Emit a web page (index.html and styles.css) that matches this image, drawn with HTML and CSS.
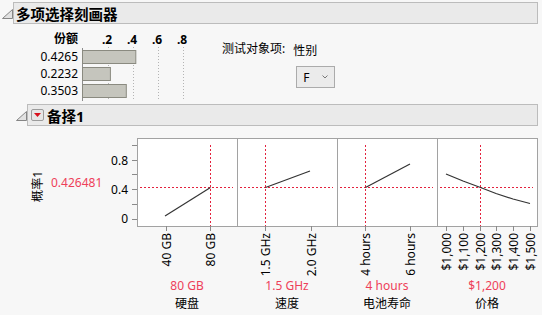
FILE: index.html
```html
<!DOCTYPE html>
<html lang="zh">
<head>
    <meta charset="UTF-8">
    <meta name="viewport" content="width=device-width, initial-scale=1.0">
    <title>多项选择刻画器</title>
    <link rel="stylesheet" href="styles.css">
</head>
<body>
    <div class="outline-head">
        <svg class="disclose" width="11" height="10" viewBox="0 0 11 10"><polygon points="0.5,9.5 10.5,0.5 10.5,9.5"/></svg>
        <div class="head-box">多项选择刻画器</div>
    </div>

    <div class="share-section">
        <div class="share-labels">
            <div class="share-title">份额</div>
            <div class="share-value">0.4265</div>
            <div class="share-value">0.2232</div>
            <div class="share-value">0.3503</div>
        </div>

        <svg class="share-plot" width="112" height="70" viewBox="0 0 112 70">
            <g class="ticks">
                <text x="25" y="11.5">.2</text>
                <text x="50" y="11.5">.4</text>
                <text x="75" y="11.5">.6</text>
                <text x="100" y="11.5">.8</text>
            </g>
            <g class="grid">
                <line x1="26.5" y1="15" x2="26.5" y2="69"/>
                <line x1="51.5" y1="15" x2="51.5" y2="69"/>
                <line x1="76.5" y1="15" x2="76.5" y2="69"/>
                <line x1="101.5" y1="15" x2="101.5" y2="69"/>
            </g>
            <line class="axis" x1="0.5" y1="16" x2="0.5" y2="69"/>
            <g class="bars">
                <rect x="0.5" y="18.5" width="53.3" height="13"/>
                <rect x="0.5" y="35.5" width="27.9" height="13"/>
                <rect x="0.5" y="52.5" width="43.8" height="13"/>
            </g>
        </svg>

        <div class="subject">
            <span class="subject-label">测试对象项:</span>
            <div class="subject-pick">
                <span class="subject-name">性别</span>
                <div class="combo">
                    <span>F</span>
                    <svg class="chevron" width="6" height="4" viewBox="0 0 6 4"><polyline points="0.5,0.5 3,3 5.5,0.5"/></svg>
                </div>
            </div>
        </div>
    </div>

    <div class="outline-head sub">
        <svg class="disclose" width="11" height="10" viewBox="0 0 11 10"><polygon points="0.5,9.5 10.5,0.5 10.5,9.5"/></svg>
        <div class="head-box">
            <span class="menu-btn"><svg width="7" height="4" viewBox="0 0 7 4"><polygon points="0,0 7,0 3.5,4"/></svg></span>
            备择1
        </div>
    </div>

    <div class="profiler">
        <div class="prof-row">
            <div class="prof-side">
                <span class="resp-name">概率1</span>
                <span class="resp-value">0.426481</span>
            </div>

            <svg class="prof-plot" width="432" height="149" viewBox="0 0 432 149">
                <!-- y axis -->
                <g class="ylabels">
                    <text x="18" y="34.5">0.8</text>
                    <text x="18" y="64">0.4</text>
                    <text x="18" y="93.3">0</text>
                </g>
                <g class="tick">
                    <line x1="22" y1="15.5" x2="27" y2="15.5"/>
                    <line x1="22" y1="30.5" x2="27" y2="30.5"/>
                    <line x1="22" y1="44.5" x2="27" y2="44.5"/>
                    <line x1="22" y1="59.5" x2="27" y2="59.5"/>
                    <line x1="22" y1="74.5" x2="27" y2="74.5"/>
                    <line x1="22" y1="89.5" x2="27" y2="89.5"/>
                </g>

                <!-- panels -->
                <g class="panel">
                    <rect x="27.5" y="8.5" width="100" height="88"/>
                    <rect x="127.5" y="8.5" width="100" height="88"/>
                    <rect x="227.5" y="8.5" width="100" height="88"/>
                    <rect x="327.5" y="8.5" width="100" height="88"/>
                </g>
                <g class="ref">
                    <line x1="30" y1="57.5" x2="123" y2="57.5"/>
                    <line x1="130" y1="57.5" x2="223" y2="57.5"/>
                    <line x1="230" y1="57.5" x2="323" y2="57.5"/>
                    <line x1="330" y1="57.5" x2="423" y2="57.5"/>
                    <line x1="100.5" y1="15" x2="100.5" y2="96"/>
                    <line x1="155.5" y1="15" x2="155.5" y2="96"/>
                    <line x1="255.5" y1="15" x2="255.5" y2="96"/>
                    <line x1="370.5" y1="15" x2="370.5" y2="96"/>
                </g>
                <g class="curve">
                    <polyline points="55,86 100.5,57.5"/>
                    <polyline points="155.5,57.5 200,41"/>
                    <polyline points="255.5,57.5 300,34"/>
                    <polyline points="336,44 353,51 370.5,57.5 386,63.5 403,69 420,73.5"/>
                </g>

                <!-- x axes -->
                <g class="tick">
                    <line x1="56.5" y1="96" x2="56.5" y2="101"/>
                    <line x1="100.5" y1="96" x2="100.5" y2="101"/>
                    <line x1="155.5" y1="96" x2="155.5" y2="101"/>
                    <line x1="201.5" y1="96" x2="201.5" y2="101"/>
                    <line x1="255.5" y1="96" x2="255.5" y2="101"/>
                    <line x1="300.5" y1="96" x2="300.5" y2="101"/>
                    <line x1="336.5" y1="96" x2="336.5" y2="101"/>
                    <line x1="353.5" y1="96" x2="353.5" y2="101"/>
                    <line x1="370.5" y1="96" x2="370.5" y2="101"/>
                    <line x1="386.5" y1="96" x2="386.5" y2="101"/>
                    <line x1="403.5" y1="96" x2="403.5" y2="101"/>
                    <line x1="420.5" y1="96" x2="420.5" y2="101"/>
                </g>
                <g class="xlabels">
                    <text transform="translate(60.5,103) rotate(-90)">40 GB</text>
                    <text transform="translate(104.5,103) rotate(-90)">80 GB</text>
                    <text transform="translate(159.5,103) rotate(-90)">1.5 GHz</text>
                    <text transform="translate(205.5,103) rotate(-90)">2.0 GHz</text>
                    <text transform="translate(259.5,103) rotate(-90)">4 hours</text>
                    <text transform="translate(304.5,103) rotate(-90)">6 hours</text>
                    <text transform="translate(340.5,103) rotate(-90)">$1,000</text>
                    <text transform="translate(357.5,103) rotate(-90)">$1,100</text>
                    <text transform="translate(374.5,103) rotate(-90)">$1,200</text>
                    <text transform="translate(390.5,103) rotate(-90)">$1,300</text>
                    <text transform="translate(407.5,103) rotate(-90)">$1,400</text>
                    <text transform="translate(424.5,103) rotate(-90)">$1,500</text>
                </g>
            </svg>
        </div>

        <div class="factors">
            <div class="factor">
                <span class="factor-value">80 GB</span>
                <span class="factor-name">硬盘</span>
            </div>
            <div class="factor">
                <span class="factor-value">1.5 GHz</span>
                <span class="factor-name">速度</span>
            </div>
            <div class="factor">
                <span class="factor-value">4 hours</span>
                <span class="factor-name">电池寿命</span>
            </div>
            <div class="factor">
                <span class="factor-value">$1,200</span>
                <span class="factor-name">价格</span>
            </div>
        </div>
    </div>
</body>
</html>
```

FILE: styles.css
```css
* {
    margin: 0;
    padding: 0;
    box-sizing: border-box;
}

body {
    font-family: "Noto Sans", "Noto Sans CJK SC", sans-serif;
    font-size: 12px;
    background: #f7f7f7;
    color: #000;
    overflow: hidden;
}

/* outline headers */
.outline-head {
    display: flex;
    align-items: center;
    margin: 2px 4px 0 2px;
}

.outline-head.sub {
    margin-top: 0;
    margin-left: 16px;
}

.disclose {
    flex: none;
    margin-top: 2px;
}

.disclose polygon {
    fill: #e2e2e2;
    stroke: #858585;
    stroke-width: 1;
}

.head-box {
    flex: 1;
    height: 22px;
    display: flex;
    align-items: center;
    padding-left: 2px;
    background: #eaeaea;
    border: 1px solid #bcbcbc;
    font-size: 14.5px;
    font-weight: bold;
}

.sub .head-box {
    padding-left: 3px;
}

.menu-btn {
    width: 13px;
    height: 12px;
    margin-right: 3px;
    display: inline-flex;
    align-items: center;
    justify-content: center;
    background: #e6e6e6;
    border: 1px solid #9c9c9c;
    border-radius: 2px;
}

.menu-btn polygon {
    fill: #d8101c;
}

/* share chart */
.share-section {
    display: flex;
    height: 80px;
    padding-top: 8px;
}

.share-labels {
    width: 78px;
    margin-right: 4px;
    text-align: right;
}

.share-title {
    font-weight: bold;
    line-height: 14px;
    margin-bottom: 2px;
}

.share-value {
    line-height: 17px;
}

.share-plot .ticks text {
    font-weight: bold;
    font-size: 12px;
    text-anchor: middle;
}

.share-plot .grid line {
    stroke: #b4b4b4;
    stroke-dasharray: 1 2;
}

.share-plot .axis {
    stroke: #8c8c8c;
}

.share-plot .bars rect {
    fill: #c5c5bd;
    stroke: #8a8a80;
}

.subject {
    display: flex;
    margin-left: 28px;
}

.subject-label {
    margin-top: 10px;
    line-height: 14px;
}

.subject-pick {
    margin-left: 8px;
    margin-top: 12px;
}

.subject-name {
    display: block;
    line-height: 14px;
}

.combo {
    width: 39px;
    height: 22px;
    margin: 8px 0 0 3px;
    padding: 0 6px;
    display: flex;
    align-items: center;
    justify-content: space-between;
    background: #ebebeb;
    border: 1px solid #ababab;
}

.chevron polyline {
    fill: none;
    stroke: #777;
}

/* profiler */
.profiler {
    margin-top: 4px;
}

.prof-row {
    display: flex;
}

.prof-side {
    width: 110px;
    height: 96px;
    padding-top: 8px;
    display: flex;
    align-items: center;
}

.resp-name {
    margin-left: 31px;
    margin-top: 8px;
    line-height: 13px;
    font-size: 12px;
    writing-mode: vertical-rl;
    text-orientation: sideways;
    transform: rotate(180deg);
}

.resp-value {
    margin-left: 7px;
    color: #ee3f5a;
}

.prof-plot text {
    font-size: 12px;
    fill: #000;
}

.prof-plot .ylabels text {
    text-anchor: end;
}

.prof-plot .xlabels text {
    text-anchor: end;
}

.prof-plot .tick line {
    stroke: #8a8a8a;
}

.prof-plot .panel rect {
    fill: #fff;
    stroke: #a2a2a2;
}

.prof-plot .ref line {
    stroke: #e4213d;
    stroke-dasharray: 2 2;
}

.prof-plot .curve polyline {
    fill: none;
    stroke: #333;
    stroke-width: 1.2;
}

.factors {
    display: grid;
    grid-template-columns: repeat(4, 100px);
    margin-left: 137px;
}

.factor {
    display: flex;
    flex-direction: column;
    align-items: center;
}

.factor-value {
    color: #ee3f5a;
    line-height: 14px;
}

.factor-name {
    margin-top: 4px;
    line-height: 14px;
}
```
